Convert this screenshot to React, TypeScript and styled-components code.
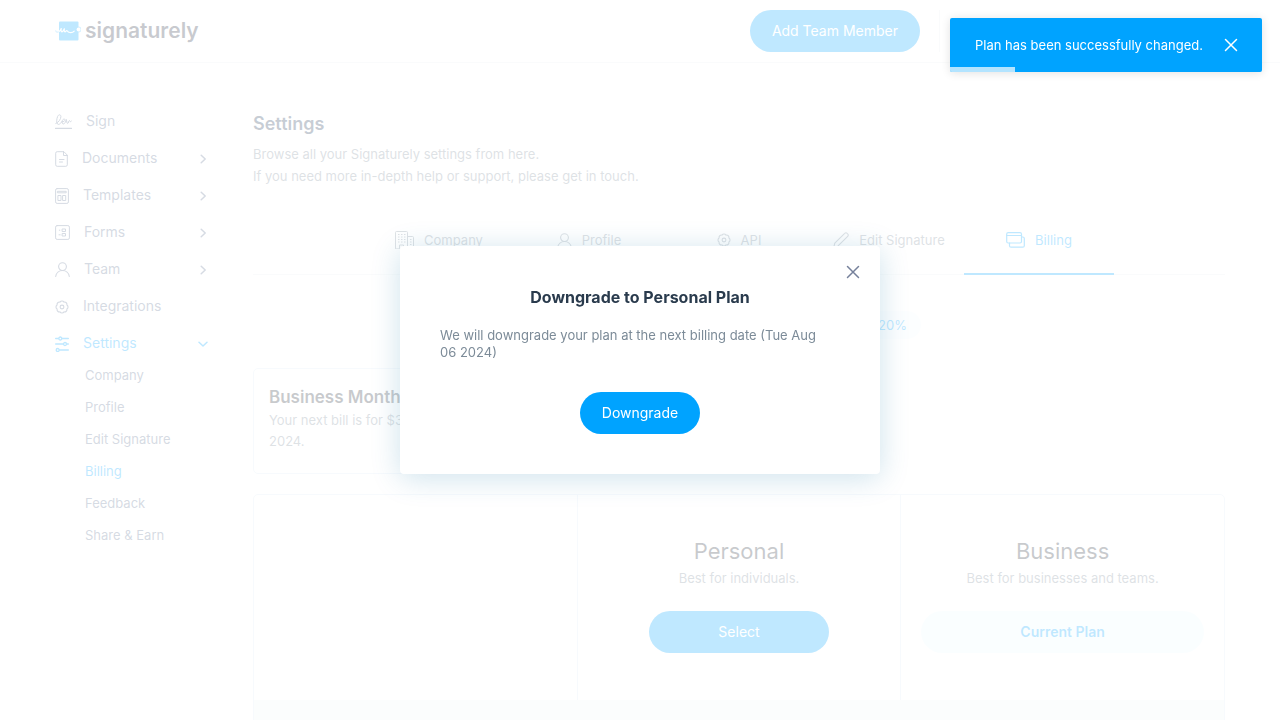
import React from "react";
import styled, { createGlobalStyle, css } from "styled-components";

const color = {
  brand: "#00a3ff",
  nav: "#5b6f8f",
  muted: "#7c8b98",
  ink: "#2a3b4d",
  line: "#dfebf5",
};

const GlobalStyle = createGlobalStyle`
  *, *::before, *::after { box-sizing: border-box; }
  html, body { height: 100%; }
  body {
    margin: 0;
    background: #fff;
    overflow: hidden;
    font-family: Inter, "Liberation Sans", sans-serif;
    font-size: 13px;
    line-height: 22px;
    color: ${color.muted};
  }
  button { font: inherit; cursor: pointer; }
  a { color: inherit; text-decoration: none; }
  h1, h2, h3, p, ul { margin: 0; padding: 0; }
  ul { list-style: none; }
  svg { display: block; flex: none; }
`;

/* ---------- icons ---------- */

type IconProps = { w: number; h: number; sw?: number; children: React.ReactNode };
const Icon = ({ w, h, sw = 1, children }: IconProps) => (
  <svg
    width={w}
    height={h}
    viewBox={`0 0 ${w} ${h}`}
    fill="none"
    stroke="currentColor"
    strokeWidth={sw}
    strokeLinecap="round"
    strokeLinejoin="round"
    aria-hidden="true"
  >
    {children}
  </svg>
);

const SignIcon = () => (
  <Icon w={17} h={15} sw={1}>
    <path d="M.5 14.300h16" strokeWidth="1.200" />
    <path d="M.8 9.500C3.500 8.500 6 5 5.900 2.500 5.800.3 3.600.2 2.600 2.500 1.600 5 1.200 9 2.700 10.200c1.500 1 3.500-1.500 4.300-2.700M7 7.800c1.800 0 3.300-1 3-2.200-.3-1-2-.6-2.600.8-.6 1.600-.2 3.600.9 3.600 1.500 0 2.400-2.400 3.100-4.500.3 1.500.4 4 1.200 4 .9 0 1-3 1.900-3 .7 0 .4 1.300 1 1.300.4 0 .8-.5 1-.9" />
  </Icon>
);
const DocumentIcon = () => (
  <Icon w={13} h={16}>
    <path d="M8.500.7H2.200A1.500 1.500 0 0 0 .7 2.200v11.600a1.500 1.500 0 0 0 1.500 1.500h8.600a1.500 1.500 0 0 0 1.500-1.500V4.500z" />
    <path d="M8.500.7v3.800h3.800M4.500 8.500h4.500M4.500 11h3" />
  </Icon>
);
const TemplateIcon = () => (
  <Icon w={14} h={16}>
    <rect x=".6" y=".6" width="12.800" height="14.800" rx="1.500" />
    <path d="M2.800 3.300h8.400v1.500H2.800zM3.300 7.500h2.700v5H3.300zM8 7.500h2.700v5H8z" />
  </Icon>
);
const FormIcon = () => (
  <Icon w={15} h={15}>
    <rect x=".6" y=".6" width="13.800" height="13.800" rx="1.500" />
    <path d="M7.500 4h3v2.500h-3zM7.500 8.500h3v2.500h-3zM4.300 5.200h.5M4 9.800h1.200" />
  </Icon>
);
const PersonIcon = () => (
  <Icon w={15} h={15} sw={1.1}>
    <circle cx="7.500" cy="4.600" r="3.900" />
    <path d="M.7 14.500C1.200 11 4 8.500 7.500 8.500s6.300 2.500 6.800 6" />
  </Icon>
);
const GearIcon = () => (
  <Icon w={14} h={14} sw={1.1}>
    <path d="M11.900 4.970A2.400 2.400 0 0 1 11.900 9.030A2.400 2.400 0 0 1 9.030 11.900A2.400 2.400 0 0 1 4.970 11.900A2.400 2.400 0 0 1 2.100 9.030A2.400 2.400 0 0 1 2.100 4.970A2.400 2.400 0 0 1 4.970 2.100A2.400 2.400 0 0 1 9.030 2.100A2.400 2.400 0 0 1 11.900 4.970z" />
    <circle cx="7" cy="7" r="1.900" />
  </Icon>
);
const SlidersIcon = () => (
  <Icon w={14} h={16} sw={1.3}>
    <path d="M.6 2.500h3M7 2.500h6.400M.6 8h7.600M11.800 8h1.600M4.600 14h8.800" />
    <circle cx="5.300" cy="2.500" r="1.500" />
    <circle cx="10" cy="8" r="1.500" />
    <circle cx="2.700" cy="14" r="1.500" />
  </Icon>
);
const CompanyIcon = () => (
  <Icon w={19} h={18}>
    <path d="M.5 17.500V1.500a1 1 0 0 1 1-1h10a1 1 0 0 1 1 1v16H8.500V14h-4v3.500zM12.500 5.500h5a1 1 0 0 1 1 1v11h-6" />
    <path d="M3 3.500h7.500M3 6h7.500M3 8.500h7.500M3 11h7.500M15 8.500h1.500M15 11h1.500M15 13.500h1.500" strokeDasharray="1.500 1.500" strokeLinecap="butt" />
  </Icon>
);
const PencilIcon = () => (
  <Icon w={16} h={16} sw={1.1}>
    <path d="M.8 15.200l1-4L11.700 1.300a1.700 1.700 0 0 1 2.500 0l.5.500a1.700 1.700 0 0 1 0 2.500L4.800 14.200z" />
  </Icon>
);
const CardsIcon = () => (
  <Icon w={19} h={16} sw={1.2}>
    <rect x=".7" y=".7" width="14.800" height="10.300" rx="1.500" />
    <path d="M.7 3.500h14.800M15.500 5h1.300a1.500 1.500 0 0 1 1.500 1.500v7.200a1.500 1.500 0 0 1-1.500 1.500H5a1.500 1.500 0 0 1-1.500-1.500V11" />
  </Icon>
);
const ChevronRight = () => (
  <Icon w={10} h={10} sw={1.5}>
    <path d="M3.200 1.200L7.200 5l-4 3.800" />
  </Icon>
);
const ChevronDown = () => (
  <Icon w={10} h={10} sw={1.5}>
    <path d="M1 3.200L5 7l4-3.800" />
  </Icon>
);
const CrossIcon = () => (
  <Icon w={14} h={14} sw={1.5}>
    <path d="M1.500 1.500l11 11M12.500 1.500l-11 11" />
  </Icon>
);
const LogoMark = () => (
  <svg width="26" height="20" viewBox="0 0 26 20" aria-hidden="true">
    <rect x="4" y=".5" width="19.500" height="19" rx="1" fill={color.brand} />
    <circle cx="23.500" cy="8.500" r="3" fill={color.brand} fillOpacity=".6" />
    <circle cx="23.500" cy="8.500" r="1.900" fill="#fff" />
    <path d="M.8 9.800c.5 1.700 2 1.600 3.200.7" fill="none" stroke={color.brand} strokeOpacity=".6" strokeWidth="1.200" strokeLinecap="round" />
    <path d="M4 10.500c1.300-.9 1.900-2.200 2.400-3.300-.5 1.700-.5 3.600.5 3.600 1.400 0 1.900-2 2.600-3.400-.4 1.600-.4 3.400.5 3.400s1-1.300 1.700-1.300c.8 0 .5 1.600 3 2 1.900.3 3.500-.3 4.500-1.300" fill="none" stroke="#fff" strokeWidth="1.200" strokeLinecap="round" />
  </svg>
);

/* ---------- shared ---------- */

const Button = styled.button<{ $width?: number }>`
  height: 42px;
  padding: 0 22px;
  border: 0;
  border-radius: 21px;
  background: ${color.brand};
  color: #fff;
  font-size: 14px;
  ${(p) => p.$width && css`width: ${p.$width}px;`}
`;

const IconButton = styled.button`
  display: grid;
  place-items: center;
  width: 22px;
  height: 22px;
  padding: 0;
  border: 0;
  background: none;
  color: inherit;
`;

/* ---------- header ---------- */

const Header = styled.header`
  display: flex;
  align-items: center;
  height: 63px;
  padding: 0 55px;
  border-bottom: 1px solid #ecf0f3;
`;
const Logo = styled.a`
  display: flex;
  align-items: center;
  gap: 4px;
  margin-right: auto;
  color: #262f42;
  font-size: 21px;
  font-weight: 600;
`;
const Account = styled.div`
  width: 286px;
  height: 42px;
  margin-left: 19px;
  border-left: 1px solid #ecf0f3;
`;

/* ---------- sidebar ---------- */

const Body = styled.div`
  display: grid;
  grid-template-columns: 155px minmax(0, 1fr);
  column-gap: 43px;
  padding: 40px 55px 0;
`;
const NavLink = styled.a<{ $active?: boolean }>`
  display: flex;
  align-items: center;
  gap: 14px;
  height: 37px;
  padding-right: 2px;
  color: ${(p) => (p.$active ? color.brand : color.nav)};
  font-size: 14px;
`;
const NavLabel = styled.span`
  padding-bottom: 2px;
`;
const Tail = styled.span`
  margin-left: auto;
`;
const SubLink = styled.a<{ $active?: boolean }>`
  display: flex;
  align-items: center;
  height: 32px;
  padding-left: 30px;
  color: ${(p) => (p.$active ? color.brand : color.nav)};
`;
const SubList = styled.ul`
  margin-top: -3px;
`;

/* ---------- main ---------- */

const Main = styled.main`
  padding-top: 10px;
`;
const PageTitle = styled.h1`
  color: #233a57;
  font-size: 18px;
  font-weight: 600;
  line-height: 22px;
`;
const Intro = styled.p`
  margin-top: 8px;
`;
const Tabs = styled.nav`
  display: flex;
  justify-content: center;
  margin-top: 32px;
  border-bottom: 1px solid #ecf0f3;
`;
const Tab = styled.a<{ $active?: boolean }>`
  display: flex;
  justify-content: center;
  align-items: center;
  gap: 10px;
  width: 150px;
  height: 56px;
  margin-bottom: -1px;
  padding-bottom: 12px;
  border-bottom: 2px solid ${(p) => (p.$active ? color.brand : "transparent")};
  color: ${(p) => (p.$active ? color.brand : color.muted)};
`;
const Period = styled.div`
  display: flex;
  justify-content: flex-end;
  width: 364px;
  margin: 36px auto 0;
`;
const Saving = styled.span`
  padding: 3px 14px;
  border-radius: 14px;
  background: #f4fbff;
  color: ${color.brand};
`;
const Subscription = styled.section`
  width: 50%;
  height: 106px;
  margin-top: 29px;
  padding: 18px 15px;
  border: 1px solid ${color.line};
  border-radius: 5px;
  line-height: 21px;
`;
const SubscriptionTitle = styled.h2`
  margin-bottom: 2px;
  color: #262f3a;
  font-size: 17px;
  font-weight: 600;
  line-height: 21px;
`;
const Plans = styled.div`
  margin-top: 20px;
  border: 1px solid ${color.line};
  border-radius: 5px;
  overflow: hidden;
`;
const PlanTable = styled.table`
  width: 100%;
  table-layout: fixed;
  border-collapse: collapse;
`;
const PlanCell = styled.th`
  height: 205px;
  padding: 43px 20px 0;
  vertical-align: top;
  font-weight: 400;
  & + & {
    border-left: 1px solid ${color.line};
  }
`;
const PlanName = styled.h3`
  margin-bottom: 3px;
  color: #262f3a;
  font-size: 22px;
  font-weight: 400;
  line-height: 26px;
`;
const PlanAction = styled.div`
  margin-top: 22px;
`;
const CurrentPlan = styled.div`
  display: grid;
  place-items: center;
  height: 42px;
  border-radius: 21px;
  background: #ecfaff;
  color: ${color.brand};
  font-size: 14px;
  font-weight: 600;
`;
const GroupCell = styled.td`
  height: 50px;
  background: #f0f6f8;
`;

/* ---------- layers above the page ---------- */

const Overlay = styled.div`
  position: fixed;
  inset: 0;
  display: grid;
  place-items: center;
  background: rgba(255, 255, 255, 0.75);
`;
const Dialog = styled.section`
  position: relative;
  width: 480px;
  max-width: 100%;
  padding: 40px;
  border-radius: 4px;
  background: #fff;
  box-shadow: 0 4px 30px rgba(10, 110, 160, 0.2);
  text-align: center;
`;
const DialogClose = styled.div`
  position: absolute;
  top: 15px;
  right: 16px;
  color: #76819b;
`;
const DialogTitle = styled.h2`
  color: ${color.ink};
  font-size: 16px;
  font-weight: 700;
  line-height: 22px;
`;
const DialogText = styled.p`
  margin: 19px 0 31px;
  padding-right: 8px;
  text-align: left;
  line-height: 17px;
`;
const Toast = styled.div`
  position: fixed;
  top: 18px;
  right: 18px;
  display: flex;
  align-items: center;
  justify-content: space-between;
  width: 312px;
  height: 54px;
  padding: 0 20px 0 25px;
  border-radius: 2px;
  overflow: hidden;
  background: ${color.brand};
  color: #fff;
  box-shadow: 0 1px 10px rgba(0, 0, 0, 0.12);
`;
const ToastProgress = styled.span`
  position: absolute;
  left: 0;
  bottom: 0;
  width: 65px;
  height: 5px;
  background: rgba(255, 255, 255, 0.7);
`;

const nav = [
  { label: "Sign", icon: <SignIcon /> },
  { label: "Documents", icon: <DocumentIcon />, more: true },
  { label: "Templates", icon: <TemplateIcon />, more: true },
  { label: "Forms", icon: <FormIcon />, more: true },
  { label: "Team", icon: <PersonIcon />, more: true },
  { label: "Integrations", icon: <GearIcon /> },
];
const subNav = ["Company", "Profile", "Edit Signature", "Billing", "Feedback", "Share & Earn"];
const tabs = [
  { label: "Company", icon: <CompanyIcon /> },
  { label: "Profile", icon: <PersonIcon /> },
  { label: "API", icon: <GearIcon /> },
  { label: "Edit Signature", icon: <PencilIcon /> },
  { label: "Billing", icon: <CardsIcon /> },
];

export default function App() {
  return (
    <>
      <GlobalStyle />
      <Header>
        <Logo href="#">
          <LogoMark />
          signaturely
        </Logo>
        <Button type="button">Add Team Member</Button>
        <Account />
      </Header>
      <Body>
        <nav>
          <ul>
            {nav.map((n) => (
              <li key={n.label}>
                <NavLink href="#">
                  {n.icon}
                  <NavLabel>{n.label}</NavLabel>
                  {n.more && <Tail><ChevronRight /></Tail>}
                </NavLink>
              </li>
            ))}
            <li>
              <NavLink href="#" $active>
                <SlidersIcon />
                <NavLabel>Settings</NavLabel>
                <Tail><ChevronDown /></Tail>
              </NavLink>
              <SubList>
                {subNav.map((s) => (
                  <li key={s}>
                    <SubLink href="#" $active={s === "Billing"}>{s}</SubLink>
                  </li>
                ))}
              </SubList>
            </li>
          </ul>
        </nav>
        <Main>
          <PageTitle>Settings</PageTitle>
          <Intro>
            Browse all your Signaturely settings from here.
            <br />
            If you need more in-depth help or support, please get in touch.
          </Intro>
          <Tabs>
            {tabs.map((t) => (
              <Tab key={t.label} href="#" $active={t.label === "Billing"}>
                {t.icon}
                {t.label}
              </Tab>
            ))}
          </Tabs>
          <Period>
            <Saving>Save 20%</Saving>
          </Period>
          <Subscription>
            <SubscriptionTitle>Business Monthly</SubscriptionTitle>
            <p>
              Your next bill is for $30 on Aug 06,
              <br />
              2024.
            </p>
          </Subscription>
          <Plans>
            <PlanTable>
              <thead>
                <tr>
                  <PlanCell as="td" />
                  <PlanCell scope="col">
                    <PlanName>Personal</PlanName>
                    <p>Best for individuals.</p>
                    <PlanAction>
                      <Button type="button" $width={180}>Select</Button>
                    </PlanAction>
                  </PlanCell>
                  <PlanCell scope="col">
                    <PlanName>Business</PlanName>
                    <p>Best for businesses and teams.</p>
                    <PlanAction>
                      <CurrentPlan>Current Plan</CurrentPlan>
                    </PlanAction>
                  </PlanCell>
                </tr>
              </thead>
              <tbody>
                <tr>
                  <GroupCell colSpan={3} />
                </tr>
              </tbody>
            </PlanTable>
          </Plans>
        </Main>
      </Body>
      <Overlay>
        <Dialog role="dialog" aria-modal="true" aria-labelledby="dialog-title">
          <DialogClose>
            <IconButton type="button" aria-label="Close"><CrossIcon /></IconButton>
          </DialogClose>
          <DialogTitle id="dialog-title">Downgrade to Personal Plan</DialogTitle>
          <DialogText>
            We will downgrade your plan at the next billing date (Tue Aug 06 2024)
          </DialogText>
          <Button type="button">Downgrade</Button>
        </Dialog>
      </Overlay>
      <Toast role="status">
        Plan has been successfully changed.
        <IconButton type="button" aria-label="Dismiss"><CrossIcon /></IconButton>
        <ToastProgress />
      </Toast>
    </>
  );
}
